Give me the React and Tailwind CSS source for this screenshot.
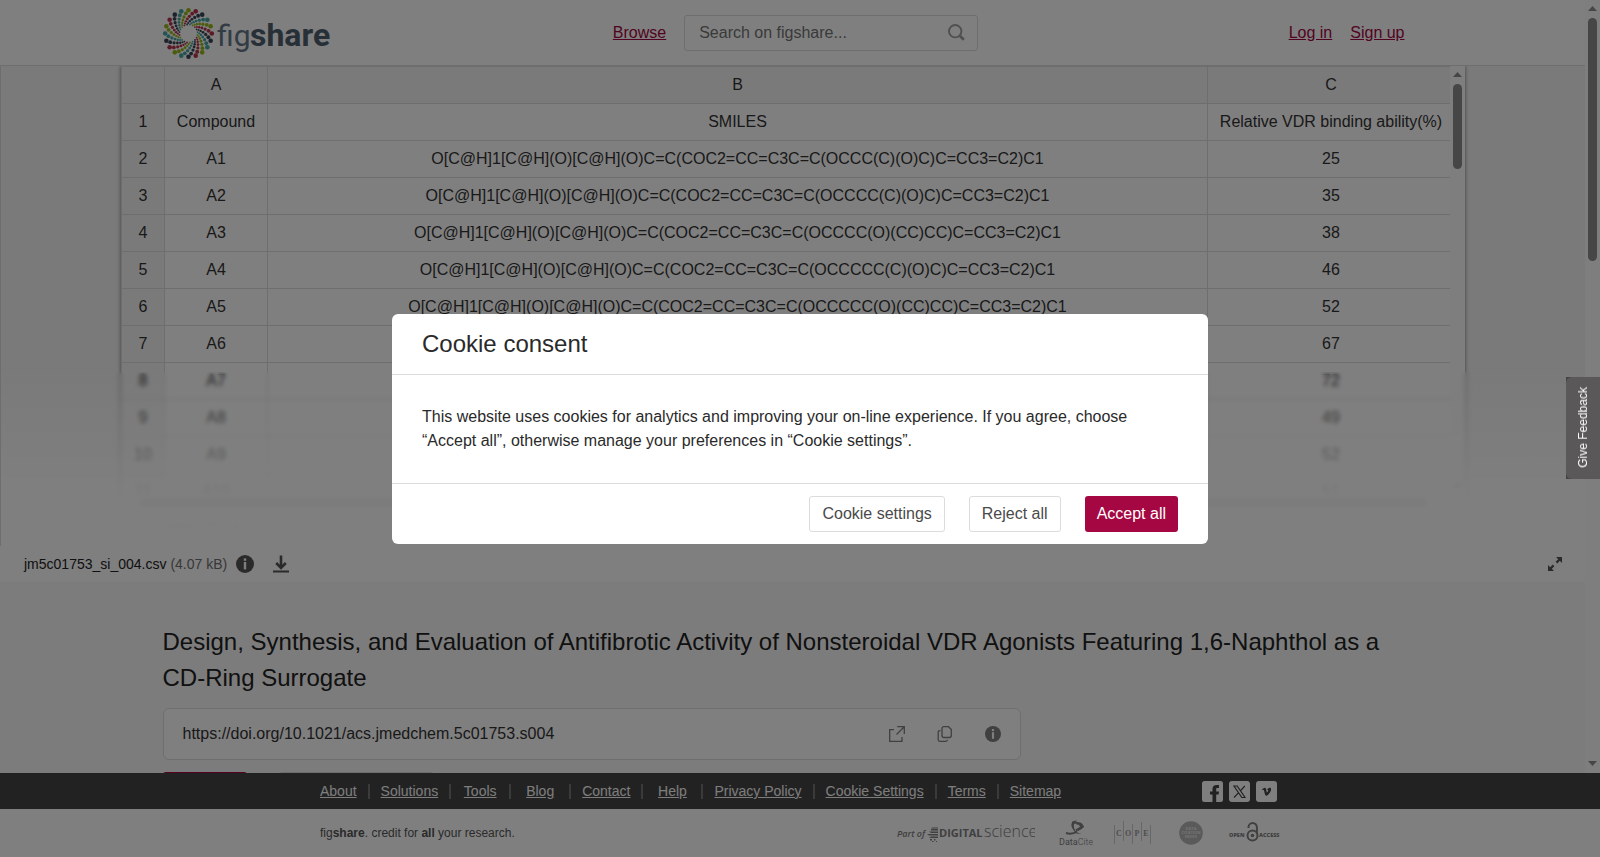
import { useState } from "react";

const ROWS = [
  ["Compound", "SMILES", "Relative VDR binding ability(%)"],
  ["A1", "O[C@H]1[C@H](O)[C@H](O)C=C(COC2=CC=C3C=C(OCCC(C)(O)C)C=CC3=C2)C1", "25"],
  ["A2", "O[C@H]1[C@H](O)[C@H](O)C=C(COC2=CC=C3C=C(OCCCC(C)(O)C)C=CC3=C2)C1", "35"],
  ["A3", "O[C@H]1[C@H](O)[C@H](O)C=C(COC2=CC=C3C=C(OCCCC(O)(CC)CC)C=CC3=C2)C1", "38"],
  ["A4", "O[C@H]1[C@H](O)[C@H](O)C=C(COC2=CC=C3C=C(OCCCCC(C)(O)C)C=CC3=C2)C1", "46"],
  ["A5", "O[C@H]1[C@H](O)[C@H](O)C=C(COC2=CC=C3C=C(OCCCCC(O)(CC)CC)C=CC3=C2)C1", "52"],
  ["A6", "", "67"],
  ["A7", "", "72"],
  ["A8", "", "49"],
  ["A9", "", "52"],
  ["A10", "", "51"],
];

const FOOTER_LINKS = [
  "About", "Solutions", "Tools", "Blog", "Contact", "Help",
  "Privacy Policy", "Cookie Settings", "Terms", "Sitemap",
];

const DOT_COLORS = ["#99b819", "#b8324d", "#3b4659", "#46a9a4"];
const DOT_RINGS = [
  [23.3, 2.3], [20.2, 1.9], [17.2, 1.6], [14.6, 1.4], [12.4, 1.2], [10.6, 1], [9.1, 0.9],
];

function Logo() {
  const dots = [];
  for (let arm = 0; arm < 20; arm++) {
    DOT_RINGS.forEach(([radius, size], step) => {
      const angle = ((arm * 18 - step * 7.5) * Math.PI) / 180;
      dots.push(
        <circle
          key={`${arm}-${step}`}
          cx={25.5 + radius * Math.sin(angle)}
          cy={27.5 - radius * Math.cos(angle)}
          r={size}
          fill={DOT_COLORS[arm % 4]}
        />
      );
    });
  }
  return (
    <svg width="172" height="54" viewBox="0 0 172 54" aria-label="figshare">
      {dots}
      <text x="54" y="40" fontSize="30" fontWeight="400" fill="#67788a" fontFamily="Roboto, sans-serif">fig</text>
      <text x="87" y="40" fontSize="32" fontWeight="700" fill="#50606f" fontFamily="Roboto, sans-serif">share</text>
    </svg>
  );
}

function InfoIcon({ size }) {
  return (
    <svg width={size} height={size} viewBox="0 0 18 18">
      <circle cx="9" cy="9" r="9" fill="currentColor" />
      <rect x="7.8" y="3.4" width="2.4" height="2.4" fill="#fff" />
      <rect x="7.8" y="7" width="2.4" height="7.4" fill="#fff" />
    </svg>
  );
}

function Arrow({ down }) {
  return (
    <svg width="9" height="5" viewBox="0 0 9 5" className="shrink-0">
      <path d={down ? "M0 0h9L4.5 5z" : "M0 5h9L4.5 0z"} fill="#8c8c8c" />
    </svg>
  );
}

function Header() {
  return (
    <header className="h-[66px] shrink-0 border-b border-[#dcdcdc] bg-white">
      <div className="mx-auto flex h-full max-w-[1260px] items-center">
        <div className="flex-1 pr-[18px]">
          <a href="#home" className="inline-block align-middle"><Logo /></a>
        </div>
        <div className="flex items-center gap-[18px] pl-1.5">
          <a href="#browse" className="text-[#a50742] underline">Browse</a>
          <form className="flex h-9 w-[294px] items-center rounded-[3px] border border-[#dcdcdc] pr-3">
            <input
              type="text"
              aria-label="Search on figshare"
              placeholder="Search on figshare..."
              className="min-w-0 flex-1 pl-3.5 outline-none placeholder:text-[#757575]"
            />
            <button type="button" aria-label="Search">
              <svg width="17" height="17" viewBox="0 0 17 17" fill="none" stroke="#a0a0a0">
                <circle cx="7.2" cy="7.2" r="6.2" strokeWidth="1.9" />
                <path d="M11.8 11.8l4 4" strokeWidth="2.8" />
              </svg>
            </button>
          </form>
        </div>
        <nav className="flex flex-1 justify-end gap-[18px] pr-[18px] text-[#a50742]">
          <a href="#login" className="underline">Log in</a>
          <a href="#signup" className="underline">Sign up</a>
        </nav>
      </div>
    </header>
  );
}

function Sheet() {
  return (
    <div className="relative h-[480px] shrink-0 overflow-hidden border-l border-[#dcdcdc] bg-[#f5f5f5] px-[120px]">
      <div className="flex h-full flex-col bg-white shadow-[0_0_4px_rgba(0,0,0,0.5)]">
        <div className="flex min-h-0 flex-1">
          <div className="min-w-0 flex-1 overflow-hidden">
            <table className="w-[calc(100%+5px)] table-fixed border-collapse text-center whitespace-nowrap text-[#333]">
              <colgroup>
                <col className="w-[43px]" />
                <col className="w-[103px]" />
                <col />
                <col className="w-[247px]" />
              </colgroup>
              <thead>
                <tr className="h-[37px] bg-[#f5f5f5]">
                  {["", "A", "B", "C"].map((name) => (
                    <th key={name} scope="col" className="border border-[#dcdcdc] font-normal">{name}</th>
                  ))}
                </tr>
              </thead>
              <tbody>
                {ROWS.map((row, i) => (
                  <tr key={row[0]} className="h-[37px]">
                    <th scope="row" className="border border-[#dcdcdc] bg-[#f5f5f5] font-normal">{i + 1}</th>
                    {row.map((cell, j) => (
                      <td key={j} className="border border-[#dcdcdc]">{cell}</td>
                    ))}
                  </tr>
                ))}
              </tbody>
            </table>
          </div>
          <div className="flex w-[15px] flex-col items-center justify-between bg-[#fcfcfc] py-1.5">
            <div className="flex flex-col items-center gap-[7px]">
              <Arrow />
              <div className="h-[85px] w-[9px] rounded-full bg-[#8c8c8c]" />
            </div>
            <Arrow down />
          </div>
        </div>
        <div className="flex h-[15px] items-center bg-[#fcfcfc] pr-[38px] pl-[18px]">
          <div className="h-[9px] flex-1 rounded-full bg-[#8c8c8c]" />
        </div>
        <div className="h-9 pt-2 pl-11 text-xs text-[#333]">jm5c01753_si...</div>
      </div>
      <div className="absolute inset-x-0 top-[306px] bottom-0 bg-linear-to-b from-transparent via-white/92 via-68% to-white backdrop-blur-[2px]" />
    </div>
  );
}

function FileBar() {
  return (
    <div className="flex h-9 shrink-0 items-center bg-white pr-[23px] pl-6 text-sm text-[#555]">
      <span className="text-[#222]">jm5c01753_si_004.csv</span>
      <span className="ml-1 text-[#707070]">(4.07 kB)</span>
      <button type="button" aria-label="File details" className="ml-[9px]"><InfoIcon size={18} /></button>
      <button type="button" aria-label="Download" className="ml-[19px]">
        <svg width="16" height="18" viewBox="0 0 16 18" fill="none" stroke="currentColor">
          <path d="M8 0.5v11.5M3.2 8l4.8 4.8L12.8 8" strokeWidth="2.6" />
          <path d="M0 16.5h16" strokeWidth="2" />
        </svg>
      </button>
      <button type="button" aria-label="Fullscreen" className="ml-auto">
        <svg width="14" height="14" viewBox="0 0 14 14" fill="currentColor">
          <path d="M8 0H14v6L11.8 3.8 9.3 6.4 7.6 4.7 10.2 2.200zM6 14H0V8L2.200 10.200 4.700 7.600 6.400 9.300 3.800 11.800z" />
        </svg>
      </button>
    </div>
  );
}

function Article() {
  return (
    <article className="mx-auto w-full max-w-[1260px] pt-[42px]">
      <h1 className="text-2xl leading-9 text-[#222]">
        Design, Synthesis, and Evaluation of Antifibrotic Activity of Nonsteroidal VDR Agonists Featuring
        1,6-Naphthol as a CD-Ring Surrogate
      </h1>
      <div className="mt-3 flex h-[52px] max-w-[858px] items-center rounded-md border border-[#dcdcdc] bg-white px-[19px] text-[#808080]">
        <span className="flex-1 text-[#333]">https://doi.org/10.1021/acs.jmedchem.5c01753.s004</span>
        <button type="button" aria-label="Open DOI">
          <svg width="16" height="16" viewBox="0 0 16 16" fill="none" stroke="currentColor" strokeWidth="1.3">
            <path d="M5 3.600H0.700V15.300H13V11M8.200 0.700H15.300V8M15 1L7.500 8.500" />
          </svg>
        </button>
        <button type="button" aria-label="Copy DOI" className="ml-8">
          <svg width="16" height="16" viewBox="0 0 16 16" fill="none" stroke="currentColor" strokeWidth="1.3">
            <path d="M7 0.700h4.500L14.300 3.500V9.500a2 2 0 0 1-2 2H7a2 2 0 0 1-2-2V2.700a2 2 0 0 1 2-2zM3.500 4.600h-.8a1.500 1.500 0 0 0-1.500 1.500v7.700a1.500 1.500 0 0 0 1.500 1.500h6.200a1.500 1.500 0 0 0 1.500-1.500" />
          </svg>
        </button>
        <button type="button" aria-label="About DOI" className="ml-8"><InfoIcon size={16} /></button>
      </div>
      <div className="mt-3 flex gap-8">
        <button type="button" aria-label="Cite" className="h-9 w-[84px] rounded-[3px] bg-[#a50742]" />
        <button type="button" aria-label="Download" className="h-9 w-[155px] rounded-[3px] border border-[#dcdcdc] bg-white" />
      </div>
    </article>
  );
}

function PartnerLogos() {
  return (
    <div className="flex items-center text-[#808080]">
      <svg width="138" height="26" viewBox="0 0 138 26" fill="currentColor" fontFamily="Open Sans, sans-serif">
        <text x="0" y="17" fontSize="9" fontStyle="italic" fontWeight="600">Part of</text>
        <path d="M34 9h7v1.500h-7zM32 11.500h9V13h-7zM30 14h11v1.500h-9zM34 16.500h7V18h-9zM35 7.500h6v1h-7zM33 19h2v1.500h-2zM37 19h1.500v1.500H37zM35 21h1.500v1H35zM39 21h1v1h-1z" />
        <text x="42" y="17" fontSize="11" fontWeight="700">DIGITAL</text>
        <text x="87" y="17" fontSize="16" fontWeight="300">science</text>
      </svg>
      <svg width="34" height="28" viewBox="0 0 34 28" className="ml-6" fill="currentColor" fontFamily="Roboto, sans-serif">
        <path d="M7 14c5 1.500 8 .6 11-1.500M13 3.500c6 .2 11 1.500 10 3.500s-4 3-6 4.500" fill="none" stroke="currentColor" strokeWidth="2" />
        <path d="M18 1.500c-5-.5-7 4-4.500 8s3.500 6 9 5c-4 0-6-2-7-4.500s-1.500-6 2.500-8.500z" />
        <path d="M17 5c4 0 8 1 8 2.500S21 11 18 12.500c2-2 3.500-3.500 3.500-4.500S19.500 6 17 5z" />
        <text x="0" y="26" fontSize="9">Data<tspan fontWeight="300">Cite</tspan></text>
      </svg>
      <svg width="38" height="26" viewBox="0 0 38 26" className="ml-5 text-[#9c9c9c]" fill="currentColor" fontFamily="Liberation Serif, serif">
        <path d="M1.500 5v19M10.500 1v20M19.500 4v20M28.500 2v19M37.500 5v19" stroke="#cfcfcf" fill="none" />
        {["C", "O", "P", "E"].map((letter, i) => (
          <text key={letter} x={6 + i * 9} y="15.500" fontSize="8" fontWeight="700" textAnchor="middle">{letter}</text>
        ))}
      </svg>
      <svg width="24" height="24" viewBox="0 0 24 24" className="ml-7">
        <circle cx="12" cy="12" r="11.800" fill="#b5b5b5" />
        <g fontSize="4" fontWeight="700" textAnchor="middle" fill="#e5e5e5" fontFamily="Open Sans, sans-serif">
          <text x="12" y="8.500">DATA</text>
          <text x="12" y="12.500">CITATION</text>
          <text x="12" y="16.500">INDEX</text>
        </g>
      </svg>
      <svg width="52" height="22" viewBox="0 0 52 22" className="ml-[25px]" fill="currentColor" fontFamily="Open Sans, sans-serif">
        <text x="1" y="15" fontSize="5.500" fontWeight="800">OPEN</text>
        <circle cx="24.500" cy="13.500" r="5" fill="none" stroke="currentColor" strokeWidth="2" />
        <circle cx="24.500" cy="13.500" r="1.800" />
        <path d="M20.500 6V5.300a4.200 4.200 0 0 1 8.400 0V12" fill="none" stroke="currentColor" strokeWidth="2" />
        <text x="31" y="15" fontSize="5.500" fontWeight="800">ACCESS</text>
      </svg>
    </div>
  );
}

function Footer() {
  return (
    <footer className="shrink-0">
      <div className="bg-[#444]">
        <div className="mx-auto flex h-9 max-w-[960px] items-center justify-between pr-[3px] text-sm text-[#fafafa]">
          <ul className="-ml-[11px] flex items-center">
            {FOOTER_LINKS.map((name) => (
              <li key={name} className="flex h-[15px] min-w-[60px] items-center justify-center border-r-2 border-[#777] px-[11px] last:border-r-0">
                <a href="#footer" className="underline">{name}</a>
              </li>
            ))}
          </ul>
          <div className="flex gap-1.5">
            <a href="#facebook" aria-label="Facebook">
              <svg width="21" height="21" viewBox="0 0 21 21">
                <rect width="21" height="21" rx="2.500" fill="#fff" />
                <path d="M10.500 21v-7.500H8v-3h2.500V8C10.500 5.200 12 4 14.500 4H17v3h-1.500c-1 0-1.300.5-1.300 1.300v2.200H17l-.4 3h-2.400V21z" fill="#444" />
              </svg>
            </a>
            <a href="#x" aria-label="X">
              <svg width="21" height="21" viewBox="0 0 21 21">
                <rect width="21" height="21" rx="3" fill="#fff" />
                <path d="M5 5h3.200L16 16.500h-3.200zM15.800 5l-4.600 5.100M9.700 11.700L5 16.500" fill="none" stroke="#444" strokeWidth="1.200" />
              </svg>
            </a>
            <a href="#vimeo" aria-label="Vimeo">
              <svg width="21" height="21" viewBox="0 0 21 21">
                <rect width="21" height="21" rx="3" fill="#fff" />
                <path d="M6 8.400C7.200 7.400 8.300 6.500 9 6.700c1.600.2 1.300 4.600 2 4.700.6 0 1.400-1.700 1.100-2.300-.2-.3-.6-.2-.9-.1.700-2.300 3.700-3 3.900-.9.200 2.300-2.900 6.600-4.700 6.600-2 0-2-5.600-2.700-5.900-.2-.1-.7.200-1 .4z" fill="#444" />
              </svg>
            </a>
          </div>
        </div>
      </div>
      <div className="bg-white">
        <div className="mx-auto flex h-12 max-w-[960px] items-center justify-between text-xs text-[#555]">
          <p>fig<b>share</b>. credit for <b>all</b> your research.</p>
          <PartnerLogos />
        </div>
      </div>
    </footer>
  );
}

function CookieDialog({ onClose }) {
  const plain = "h-9 rounded-[3px] border border-[#dcdcdc] px-3 text-[#4a4a4a]";
  return (
    <div className="fixed inset-0 flex items-center justify-center bg-black/50">
      <div role="dialog" aria-labelledby="cookie-title" className="w-full max-w-[816px] rounded-md bg-white text-[#2a2a2a]">
        <h2 id="cookie-title" className="border-b border-[#dcdcdc] px-[30px] py-3 text-2xl leading-9">Cookie consent</h2>
        <p className="p-[30px]">
          This website uses cookies for analytics and improving your on-line experience. If you agree, choose
          “Accept all”, otherwise manage your preferences in “Cookie settings”.
        </p>
        <div className="flex justify-end gap-6 border-t border-[#dcdcdc] px-[30px] py-3">
          <button type="button" className={plain}>Cookie settings</button>
          <button type="button" onClick={onClose} className={plain}>Reject all</button>
          <button type="button" onClick={onClose} className="h-9 rounded-[3px] bg-[#a50742] px-3 text-white">Accept all</button>
        </div>
      </div>
    </div>
  );
}

export default function App() {
  const [consentOpen, setConsentOpen] = useState(true);

  return (
    <div className="flex h-screen flex-col font-['Liberation_Sans',Arial,sans-serif] text-base">
      <div className="flex min-h-0 flex-1">
        <main className="flex min-w-0 flex-1 flex-col overflow-hidden bg-[#f9f9f9]">
          <Header />
          <Sheet />
          <FileBar />
          <Article />
        </main>
        <div className="flex w-[15px] shrink-0 flex-col items-center justify-between bg-[#fcfcfc] pt-1.5 pb-[7px]">
          <div className="flex flex-col items-center gap-[7px]">
            <Arrow />
            <div className="h-[243px] w-[9px] rounded-full bg-[#8c8c8c]" />
          </div>
          <Arrow down />
        </div>
      </div>
      <Footer />

      {consentOpen && <CookieDialog onClose={() => setConsentOpen(false)} />}

      <div className="fixed top-1/2 right-0 -mt-[52px] bg-[#444]">
        <button type="button" className="flex h-[102px] w-[34px] items-center justify-center rounded-l-md bg-[#5b5859] text-xs text-white">
          <span className="rotate-180 [writing-mode:vertical-rl]">Give Feedback</span>
        </button>
      </div>
    </div>
  );
}
